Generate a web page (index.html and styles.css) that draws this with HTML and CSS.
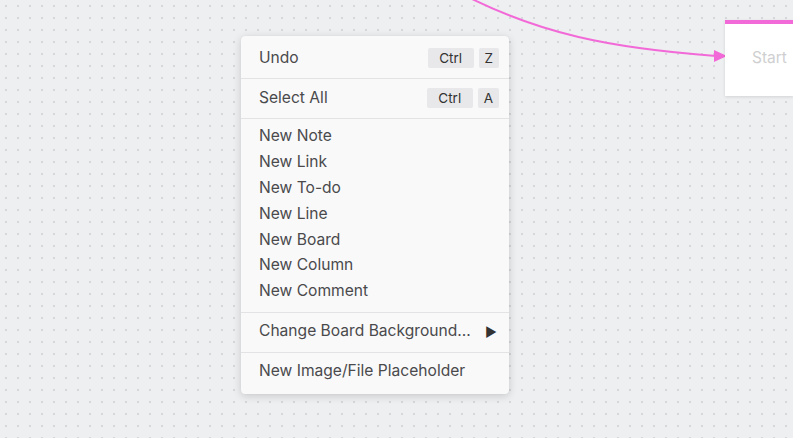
FILE: index.html
```html
<!DOCTYPE html>
<html>
<head>
<meta charset="utf-8">
<link rel="stylesheet" href="styles.css">
</head>
<body>
<div class="canvas">
  <svg class="connector" width="793" height="438" viewBox="0 0 793 438">
    <path d="M 462 -6 C 540 34, 610 48, 716 56" fill="none" stroke="#f26ad8" stroke-width="2"/>
    <polygon points="714,50 727,56 714,62" fill="#f26ad8"/>
  </svg>
  <div class="node">
    <div class="node-bar"></div>
    <div class="node-body">Start</div>
  </div>
  <div class="menu">
    <div class="section first">
      <div class="item tall"><span class="label">Undo</span><span class="keys"><kbd class="mod">Ctrl</kbd><kbd>Z</kbd></span></div>
    </div>
    <div class="section">
      <div class="item tall"><span class="label">Select All</span><span class="keys"><kbd class="mod">Ctrl</kbd><kbd>A</kbd></span></div>
    </div>
    <div class="section list">
      <div class="item">New Note</div>
      <div class="item">New Link</div>
      <div class="item">New To-do</div>
      <div class="item">New Line</div>
      <div class="item">New Board</div>
      <div class="item">New Column</div>
      <div class="item">New Comment</div>
    </div>
    <div class="section">
      <div class="item tall"><span class="label">Change Board Background...</span><span class="arrow">&#9654;</span></div>
    </div>
    <div class="section last">
      <div class="item tall">New Image/File Placeholder</div>
    </div>
  </div>
</div>
</body>
</html>
```
FILE: styles.css
```css
html, body {
  margin: 0;
  padding: 0;
}
body {
  width: 793px;
  height: 438px;
  overflow: hidden;
  font-family: Inter, "Noto Sans", sans-serif;
}
.canvas {
  position: relative;
  width: 793px;
  height: 438px;
  overflow: hidden;
  background-color: #eeeff1;
  background-image: radial-gradient(circle, #d6d7da 0.9px, transparent 1.2px);
  background-size: 12px 12px;
  background-position: 0 0;
}
.connector {
  position: absolute;
  left: 0;
  top: 0;
}
.node {
  position: absolute;
  left: 725px;
  top: 20px;
  width: 68px;
  height: 76px;
  background: #ffffff;
  box-shadow: 0 1px 3px rgba(0,0,0,0.12);
  display: flex;
  flex-direction: column;
}
.node-bar {
  height: 4px;
  background: #f26ad8;
}
.node-body {
  flex: 1;
  display: flex;
  align-items: center;
  padding-left: 27px;
  padding-bottom: 5px;
  color: #cfcfd1;
  font-size: 15.5px;
}
.menu {
  position: absolute;
  left: 241px;
  top: 36px;
  width: 268px;
  background: #f9f9f9;
  border-radius: 4px;
  box-shadow: 0 2px 8px rgba(0,0,0,0.16), 0 0 1px rgba(0,0,0,0.1);
  padding: 3px 0 2px;
  color: #4a4a4d;
  font-size: 15.6px;
}
.section {
  padding: 6px 0;
  border-top: 1px solid #e3e3e5;
}
.section.first {
  border-top: none;
}
.section.list {
  padding-top: 5px;
  padding-bottom: 7px;
}
.item {
  height: 25.8px;
  box-sizing: border-box;
  display: flex;
  align-items: center;
  padding: 0 10px 2px 18px;
  white-space: nowrap;
}
.item.tall {
  height: 27px;
  padding-bottom: 3px;
}
.label {
  flex: 1;
}
.keys {
  display: flex;
  gap: 5px;
  margin-top: 2px;
}
kbd {
  font-family: Inter, "Noto Sans", sans-serif;
  font-size: 13.5px;
  color: #333;
  background: #e8e8ea;
  height: 20px;
  line-height: 20px;
  padding: 0 6px;
  border-radius: 2px;
}
kbd.mod {
  padding: 0 11.5px;
}
.arrow {
  font-size: 13px;
  color: #333;
  padding-right: 2px;
  margin-top: 2px;
}
```
